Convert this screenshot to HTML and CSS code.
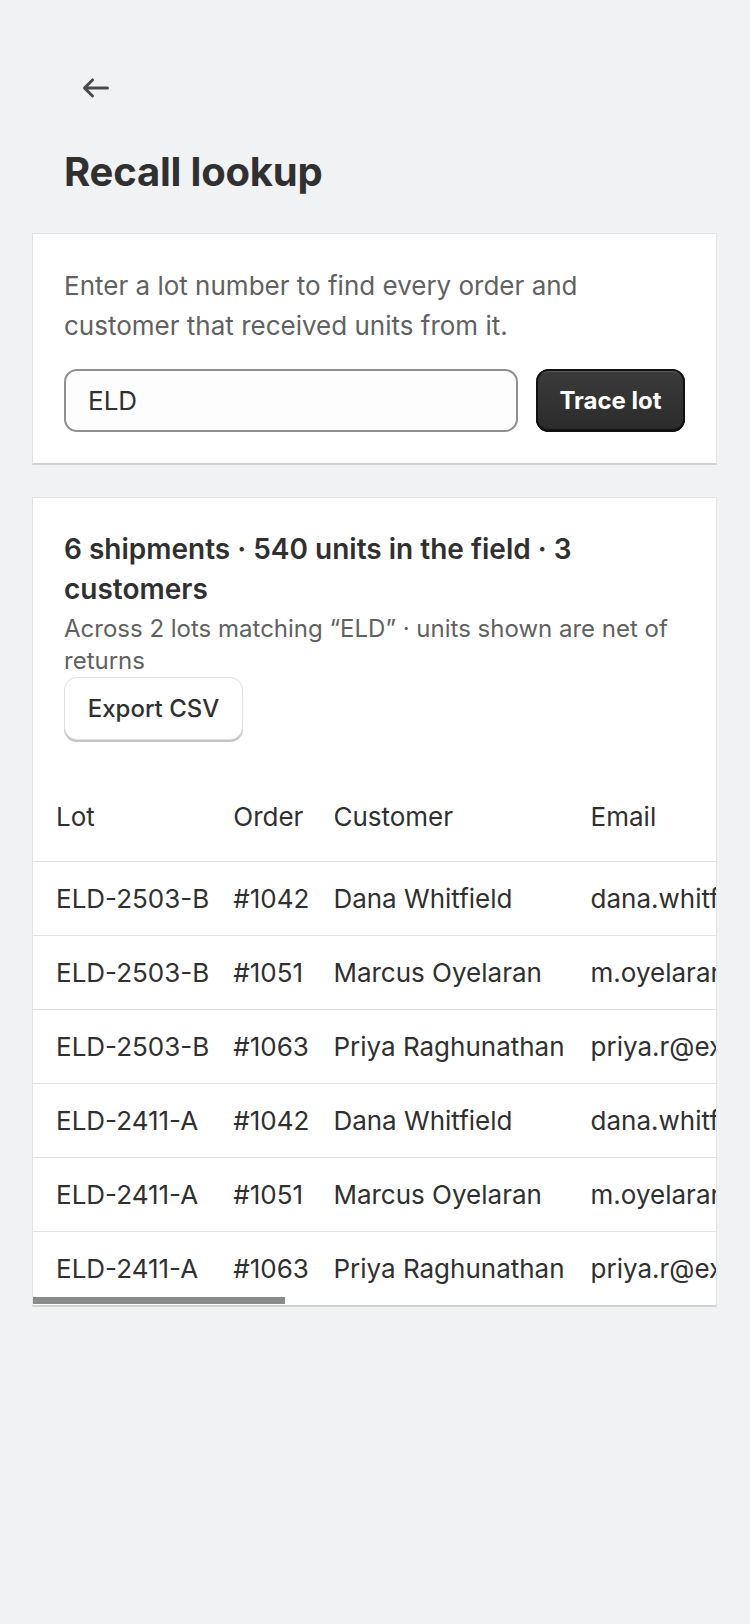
FILE: index.html
```html
<!DOCTYPE html>
<html lang="en">
<head>
    <meta charset="UTF-8">
    <meta name="viewport" content="width=device-width, initial-scale=1.0">
    <title>Recall lookup</title>
    <link rel="stylesheet" href="styles.css">
</head>
<body>

<header class="page-header">
    <a class="back-link" href="#" aria-label="Back">
        <svg width="40" height="40" viewBox="0 0 20 20" fill="currentColor">
            <path d="M16.5 10a.75.75 0 0 1-.75.75h-9.69l2.72 2.72a.75.75 0 0 1-1.06 1.06l-4-4a.75.75 0 0 1 0-1.06l4-4a.75.75 0 1 1 1.06 1.06l-2.72 2.72h9.69a.75.75 0 0 1 .75.75Z"/>
        </svg>
    </a>
    <h1>Recall lookup</h1>
</header>

<section class="card lookup-card">
    <p class="intro">Enter a lot number to find every order and customer that received units from it.</p>
    <form class="lookup-form">
        <input class="lot-input" type="text" value="ELD">
        <button class="trace-button" type="button">Trace lot</button>
    </form>
</section>

<section class="card results-card">
    <div class="results-head">
        <h2>6 shipments · 540 units in the field · 3 customers</h2>
        <p class="results-note">Across 2 lots matching “ELD” · units shown are net of returns</p>
        <button class="export-button" type="button">Export CSV</button>
    </div>

    <div class="table-wrap">
        <table class="results-table">
            <thead>
                <tr>
                    <th>Lot</th>
                    <th>Order</th>
                    <th>Customer</th>
                    <th>Email</th>
                    <th>Units</th>
                    <th>Shipped</th>
                    <th>Returned</th>
                    <th>Status</th>
                </tr>
            </thead>
            <tbody>
                <tr>
                    <td>ELD-2503-B</td><td>#1042</td><td>Dana Whitfield</td><td>dana.whitfield@example.com</td>
                    <td>120</td><td>Mar 4, 2025</td><td>0</td><td>Delivered</td>
                </tr>
                <tr>
                    <td>ELD-2503-B</td><td>#1051</td><td>Marcus Oyelaran</td><td>m.oyelaran@example.com</td>
                    <td>90</td><td>Mar 9, 2025</td><td>0</td><td>Delivered</td>
                </tr>
                <tr>
                    <td>ELD-2503-B</td><td>#1063</td><td>Priya Raghunathan</td><td>priya.r@example.com</td>
                    <td>60</td><td>Mar 15, 2025</td><td>10</td><td>Delivered</td>
                </tr>
                <tr>
                    <td>ELD-2411-A</td><td>#1042</td><td>Dana Whitfield</td><td>dana.whitfield@example.com</td>
                    <td>100</td><td>Mar 4, 2025</td><td>0</td><td>Delivered</td>
                </tr>
                <tr>
                    <td>ELD-2411-A</td><td>#1051</td><td>Marcus Oyelaran</td><td>m.oyelaran@example.com</td>
                    <td>80</td><td>Mar 9, 2025</td><td>0</td><td>Delivered</td>
                </tr>
                <tr>
                    <td>ELD-2411-A</td><td>#1063</td><td>Priya Raghunathan</td><td>priya.r@example.com</td>
                    <td>100</td><td>Mar 15, 2025</td><td>10</td><td>In transit</td>
                </tr>
            </tbody>
        </table>
        <!-- overlay scrollbar -->
        <div class="scroll-thumb"></div>
    </div>
</section>

</body>
</html>
```

FILE: styles.css
```css
body {
    font-family: Inter, 'Noto Sans', sans-serif;
    margin: 0;
    padding: 0 0 40px;
    background-color: #f1f2f4;
    color: #303030;
}

.page-header {
    padding: 68px 64px 0;
}

.back-link {
    display: block;
    width: 40px;
    height: 40px;
    margin-left: 12px;
    color: #4a4a4a;
}

.back-link svg {
    display: block;
}

h1 {
    margin: 40px 0 37px;
    font-size: 40px;
    line-height: 48px;
    font-weight: 700;
    letter-spacing: -0.2px;
}

.card {
    margin: 0 33px 32px 32px;
    background-color: white;
    border: 1px solid #e3e3e3;
    border-bottom: 2px solid #d2d2d2;
}

.lookup-card {
    padding: 32px 31px 31px;
}

.intro {
    margin: 0 0 23px;
    font-size: 26px;
    line-height: 40px;
    color: #616161;
}

.lookup-form {
    display: flex;
    gap: 18px;
}

.lot-input {
    flex: 1;
    min-width: 0;
    height: 63px;
    box-sizing: border-box;
    padding: 0 22px;
    border: 2px solid #8f8f8f;
    border-radius: 13px;
    background-color: #fdfdfd;
    font-family: inherit;
    font-size: 26px;
    color: #303030;
}

.trace-button {
    width: 149px;
    height: 63px;
    border: none;
    border-radius: 13px;
    background: linear-gradient(#3b3b3b, #2b2b2b);
    box-shadow: inset 0 0 0 2px #111, inset 0 3px 0 rgba(255, 255, 255, 0.16), inset 0 -3px 0 rgba(0, 0, 0, 0.5);
    color: white;
    font-family: inherit;
    font-size: 24px;
    font-weight: 700;
    cursor: pointer;
}

.results-card {
    overflow: hidden;
}

.results-head {
    padding: 31px 31px 32px;
}

h2 {
    margin: 0;
    font-size: 28px;
    line-height: 40px;
    font-weight: 600;
}

.results-note {
    margin: 4px 0 0;
    font-size: 24px;
    line-height: 32px;
    color: #616161;
}

.export-button {
    width: 179px;
    height: 63px;
    border: 1px solid #e0e0e0;
    border-radius: 13px;
    background-color: white;
    box-shadow: 0 2px 0 #c4c4c4;
    color: #303030;
    font-family: inherit;
    font-size: 24px;
    font-weight: 500;
    cursor: pointer;
}

.table-wrap {
    position: relative;
    overflow: hidden;
}

.results-table {
    border-collapse: collapse;
    white-space: nowrap;
    font-size: 26px;
    line-height: 32px;
}

.results-table th {
    padding: 29px 12px 28px;
    text-align: left;
    font-weight: 400;
    border-bottom: 1px solid #e3e3e3;
}

.results-table td {
    padding: 21px 12px 20px;
    border-bottom: 1px solid #e3e3e3;
}

.results-table tr:last-child td {
    border-bottom: none;
    padding-bottom: 20px;
}

.results-table th:first-child,
.results-table td:first-child {
    padding-left: 23px;
}

.results-table th:nth-child(3),
.results-table td:nth-child(3) {
    padding-right: 14px;
}

.results-table th:last-child,
.results-table td:last-child {
    padding-right: 40px;
}

.results-table td:nth-child(4),
.results-table th:nth-child(4) {
    padding-right: 60px;
}

.scroll-thumb {
    position: absolute;
    left: 0;
    bottom: 1px;
    width: 252px;
    height: 7px;
    background-color: #8a8a8a;
}
```
